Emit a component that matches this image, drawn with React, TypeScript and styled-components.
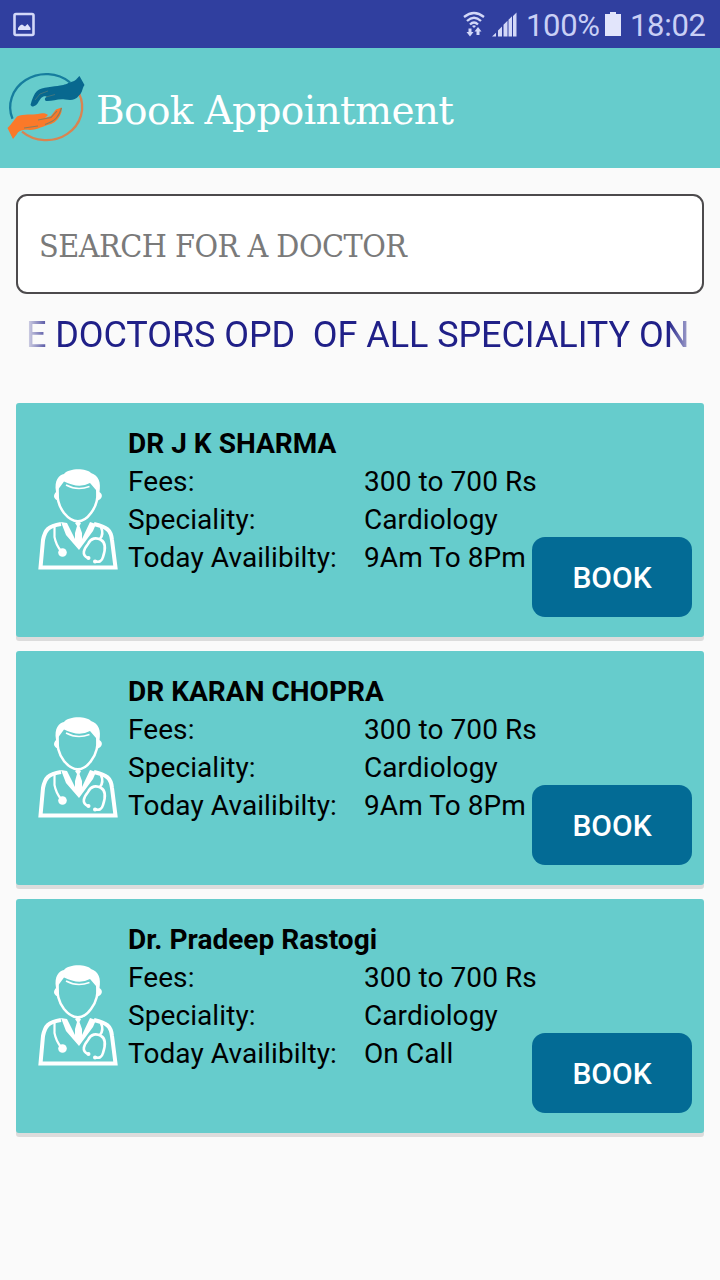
import React from "react";
import styled, { createGlobalStyle } from "styled-components";

const GlobalStyle = createGlobalStyle`
  * { box-sizing: border-box; }
  body {
    margin: 0;
    background: #fafafa;
    font-family: Roboto, "Liberation Sans", sans-serif;
    color: #000;
  }
`;

const Screen = styled.div`
  width: 720px;
  height: 1280px;
  overflow: hidden;
  background: #fafafa;
`;

const StatusBar = styled.div`
  height: 48px;
  padding: 0 14px 0 12px;
  display: flex;
  align-items: center;
  background: #303f9f;
  color: #c9cff5;
  svg { display: block; flex: none; }
`;

const StatusGroup = styled.div`
  margin-left: auto;
  display: flex;
  align-items: center;
`;

const WifiSlot = styled.span`
  margin-right: 6px;
`;

const StatusText = styled.span<{ $width: number; $indent: number }>`
  width: ${(p) => p.$width}px;
  padding: 3px 0 0 ${(p) => p.$indent}px;
  font-size: 31px;
  line-height: 48px;
  white-space: nowrap;
  letter-spacing: -0.3px;
`;

const AppBar = styled.header`
  height: 120px;
  padding-top: 4px;
  display: flex;
  align-items: center;
  background: #66cccc;
`;

const Title = styled.h1`
  margin: 0 0 0 -4px;
  padding-top: 1px;
  font: 400 39px/54px "DejaVu Serif", serif;
  letter-spacing: -0.62px;
  color: #fff;
  white-space: nowrap;
`;

const Content = styled.main`
  padding: 26px 16px 0;
`;

const SearchInput = styled.input`
  display: block;
  width: 100%;
  height: 100px;
  padding: 3px 22px 0 21px;
  border: 2px solid #4c4a4c;
  border-radius: 11px;
  background: #fff;
  outline: none;
  font: 400 32px/44px "DejaVu Serif Condensed", "DejaVu Serif", serif;
  font-stretch: condensed;
  letter-spacing: -0.5px;
  color: #333;
  &::placeholder { color: #7a7a7a; opacity: 1; }
`;

const Ticker = styled.div`
  margin: 19px 12px 0;
  height: 44px;
  overflow: hidden;
  display: flex;
  white-space: pre;
  font-size: 36px;
  line-height: 44px;
  color: #202088;
  mask-image: linear-gradient(to right, transparent -6px, #000 26px, #000 calc(100% - 24px), transparent calc(100% + 10px));
`;

const TickerText = styled.span`
  margin-left: -2px;
  letter-spacing: -0.07px;
`;

const DoctorList = styled.div`
  margin-top: 46px;
  display: grid;
  gap: 14px;
`;

const Card = styled.article`
  height: 234px;
  padding: 21px 12px 20px 20px;
  display: flex;
  background: #66cccc;
  border-radius: 3px;
  box-shadow: 0 4px 0 #dcdcdc;
`;

const Avatar = styled.svg`
  flex: none;
  width: 84px;
  height: 104px;
  margin-top: 44px;
`;

const Details = styled.div`
  flex: none;
  width: 412px;
  padding: 1px 0 0 8px;
  font-size: 28px;
  line-height: 38px;
  letter-spacing: 0.08px;
  white-space: nowrap;
`;

const DoctorName = styled.h2`
  margin: 0;
  font-size: 28px;
  line-height: 38px;
  font-weight: 700;
  letter-spacing: 0.03px;
`;

const Row = styled.div`
  display: grid;
  grid-template-columns: 236px auto;
`;

const BookButton = styled.button`
  flex: none;
  align-self: flex-end;
  width: 160px;
  height: 80px;
  padding: 1px 0 0;
  border: 0;
  border-radius: 13px;
  background: #036b95;
  color: #fff;
  font: 500 30px/38px Roboto, "Liberation Sans", sans-serif;
`;

const doctors = [
  { name: "DR J K SHARMA", hours: "9Am To 8Pm" },
  { name: "DR KARAN CHOPRA", hours: "9Am To 8Pm" },
  { name: "Dr. Pradeep Rastogi", hours: "On Call" },
];

const PictureIcon = () => (
  <svg width="24" height="26" viewBox="0 0 24 26">
    <rect x="2.500" y="3" width="19" height="21" rx="1.500" fill="none" stroke="#d3d8f8" strokeWidth="2.600" />
    <path d="M6 19v-2l2-2.500 2-1 3 2 2.500-2.500L18.500 17v2Z" fill="#e0e3fa" />
  </svg>
);

const WifiIcon = () => (
  <svg width="24" height="28" viewBox="0 0 24 28">
    <g fill="none" stroke="#d3d8f8" strokeWidth="2.300">
      <path d="M2 7Q12-1 22 7" />
      <path d="M5 11Q12 4.500 19 11" />
      <path d="M8 14.500Q12 10.500 16 14.500" />
    </g>
    <path d="M10 16q2-1.500 4 0l-2 2Z" fill="#d3d8f8" />
    <path d="M6.500 18.500h3V22h2l-3.500 4.500-3.500-4.500h2ZM14.500 25v-3.500h-2l3.500-4.500 3.500 4.500h-2V25Z" fill="#d3d8f8" />
  </svg>
);

const SignalIcon = () => (
  <svg width="26" height="26" viewBox="0 0 26 26">
    <path d="M0 25.500l4-3.800V25.500ZM6 25.500v-6l4-4V25.500ZM11.500 25.500V13.800l4-4V25.500ZM16.500 25.500V8.800l3.500-3.500V25.500ZM21 25.500V5l3.500-3.500V25.500Z" fill="#d3d8f8" />
  </svg>
);

const BatteryIcon = () => (
  <svg width="16" height="24" viewBox="0 0 16 24">
    <path d="M5 0h6v2h5v22H0V2h5Z" fill="#e2e5fb" />
  </svg>
);

const Logo = () => (
  <svg width="100" height="100" viewBox="0 0 100 100">
    <path d="M12.500 58.800A36 33 0 0 1 70 22.400" fill="none" stroke="#167d9e" strokeWidth="2.300" />
    <path d="M79 33.600A36 33 0 0 1 22 71.600" fill="none" stroke="#d98451" strokeWidth="2.300" />
    <path d="M30.500 45C32 39 34 34 37 31C42 26.500 54 27 60 25.500C65 25 67 23.500 71 22C76 21 77 18 79.500 16L84.500 25C82 28 83 32 79 35.500C75 41 70 40 65 39.500C58 38.500 52 41.500 46 41C44 39.500 45 37.500 47 36.500C42 35.500 41 38.500 39 41C37.500 44 35.500 46.500 32 46.500Z" fill="#08688f" />
    <path d="M35 40L40 34L48 31M46 37L55 34.500" fill="none" stroke="#42777e" strokeWidth="1" />
    <path d="M7.500 68C10 66 14 60 17 56.500C24 53.500 32 55 38 54C42 52.500 46 53 48 55L45 58L51 56L56 49.500L61.500 47.500L61.500 52C59.500 58 56 62 51 64C43 66 38 69.500 30 70C24 69.500 19 70 17 74L13 79Z" fill="#fb7929" />
    <path d="M38 60L51 57.500L57 51M45 64.500C56 61 59 56 61.500 48M24 68L38 66" fill="none" stroke="#8c7e5c" strokeWidth="1.100" />
  </svg>
);

const DoctorAvatar = () => (
  <Avatar viewBox="0 0 84 104">
    <g fill="none" stroke="#fff">
      <path d="M21.500 20C21 30 22 37 28 45C37 56 47 56 55 45C61 37 62 30 61.500 20" strokeWidth="2.500" />
      <path d="M30 17Q41 23 53.500 18.500" strokeWidth="1.500" />
      <path d="M25 56C12 58 9 62 7 72L4.500 99.500H79.500L76 72C75 62 71 59 58 56" strokeWidth="4" />
      <path d="M18.500 59V69Q20 77 25 83" strokeWidth="2.200" />
      <path d="M65 59Q68 66 64 71M52 90C45 87 48 81 52 76C55 70 60 69 65 72C71 75 69 83 67 89C66 93 63 95 59 93" strokeWidth="2.600" />
    </g>
    <path d="M23 33C17 31 17 27 20 24C18 12 23 7 28 6C33 0 50 0 55 5C63 8 65 14 63.500 24C67 26 67 31 61 33L60 22L54 15Q43 21 28 13.500L22.500 21Z" fill="#fff" />
    <path d="M25 54L31 55L39 71L39 65L41 58L39 55L42 53L45 55L43.500 58L46 65L46 71L54 54L60 56L57 63L43 82L30 67Z" fill="#fff" />
    <circle cx="26.500" cy="84.500" r="4.300" fill="#fff" />
    <circle cx="52.500" cy="90" r="2" fill="#fff" />
    <circle cx="59" cy="93.500" r="2" fill="#fff" />
  </Avatar>
);

export default function App() {
  return (
    <Screen>
      <GlobalStyle />
      <StatusBar>
        <PictureIcon />
        <StatusGroup>
          <WifiSlot><WifiIcon /></WifiSlot>
          <SignalIcon />
          <StatusText $width={87} $indent={8}>100%</StatusText>
          <BatteryIcon />
          <StatusText $width={85} $indent={9}>18:02</StatusText>
        </StatusGroup>
      </StatusBar>
      <AppBar>
        <Logo />
        <Title>Book Appointment</Title>
      </AppBar>
      <Content>
        <SearchInput placeholder="SEARCH FOR A DOCTOR" />
        <Ticker>
          <TickerText>{"E DOCTORS OPD  OF ALL SPECIALITY ON"}</TickerText>
        </Ticker>
        <DoctorList>
          {doctors.map((d) => (
            <Card key={d.name}>
              <DoctorAvatar />
              <Details>
                <DoctorName>{d.name}</DoctorName>
                <Row><span>Fees:</span><span>300 to 700 Rs</span></Row>
                <Row><span>Speciality:</span><span>Cardiology</span></Row>
                <Row><span>Today Availibilty:</span><span>{d.hours}</span></Row>
              </Details>
              <BookButton>BOOK</BookButton>
            </Card>
          ))}
        </DoctorList>
      </Content>
    </Screen>
  );
}
